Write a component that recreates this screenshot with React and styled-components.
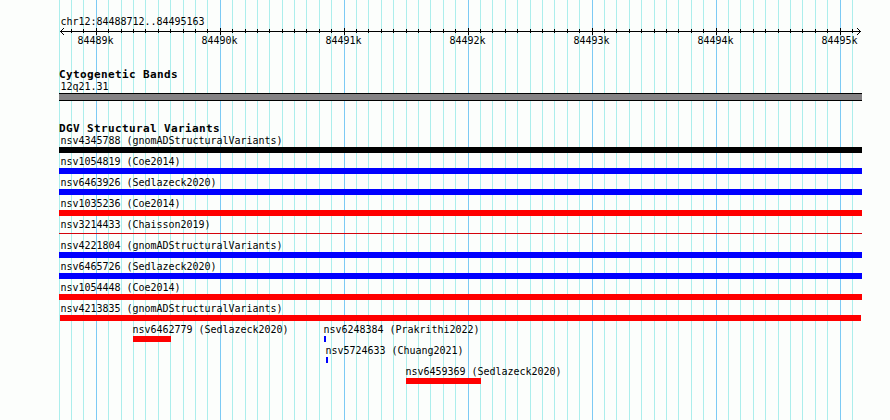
import React from "react";
import styled, { createGlobalStyle } from "styled-components";

const GlobalStyle = createGlobalStyle`
  body {
    margin: 0;
    background: #fcfefc;
  }
`;

const Browser = styled.main`
  position: relative;
  box-sizing: border-box;
  width: 890px;
  height: 420px;
  padding: 15px 28px 0 59px;
  overflow: hidden;
  background: #fcfefc;
  color: #000;
  font-family: "DejaVu Sans Mono", monospace;
`;

const Grid = styled.svg`
  position: absolute;
  inset: 0;
  shape-rendering: crispEdges;
`;

const Content = styled.div`
  position: relative;
  display: flex;
  flex-direction: column;
`;

const Label = styled.div`
  height: 12px;
  margin-left: ${(props) => props.$indent ?? 1.5}px;
  font-size: 10px;
  line-height: 14px;
  letter-spacing: -0.02px;
  white-space: pre;
`;

const Title = styled.h2`
  height: 12px;
  margin: 0;
  font-size: 11px;
  font-weight: bold;
  line-height: 14px;
  letter-spacing: 0.378px;
  white-space: pre;
`;

const Axis = styled.svg`
  display: block;
  width: 803px;
  height: 20px;
  overflow: visible;
  & path {
    fill: none;
    stroke: #000;
    shape-rendering: crispEdges;
  }
  & text {
    font-size: 10px;
    letter-spacing: -0.02px;
  }
`;

const Track = styled.section`
  margin-top: 21px;
`;

const Band = styled.div`
  box-sizing: border-box;
  height: 8px;
  margin-top: 1px;
  border: solid #000;
  border-width: 1px 0;
  background: #848284;
`;

const Row = styled.div`
  display: flex;
  height: 21px;
`;

const Variant = styled.div`
  flex: none;
  width: ${(props) => props.$width}px;
  margin-left: ${(props) => props.$gap}px;
`;

const Bar = styled.div`
  height: ${(props) => (props.$thin ? 1 : 6)}px;
  margin-top: ${(props) => (props.$thin ? 3 : 1)}px;
  background: ${(props) => props.$color};
`;

const LEFT = 59;

// one line every 100 bp, every tenth one falls on a full kb
const lines = Array.from({ length: 65 }, (_, i) => {
  const n = i - 3;
  return { x: Math.floor(96.25 + n * 12.3965), major: n % 10 === 0, kb: 84489 + n / 10 };
});

// gap is the distance to the previous variant of the same row
const rows = [
  [{ name: "nsv4345788 (gnomADStructuralVariants)", color: "#000" }],
  [{ name: "nsv1054819 (Coe2014)", color: "#00f" }],
  [{ name: "nsv6463926 (Sedlazeck2020)", color: "#00f" }],
  [{ name: "nsv1035236 (Coe2014)", color: "#f00" }],
  [{ name: "nsv3214433 (Chaisson2019)", color: "#d4020c", thin: true }],
  [{ name: "nsv4221804 (gnomADStructuralVariants)", color: "#00f" }],
  [{ name: "nsv6465726 (Sedlazeck2020)", color: "#00f" }],
  [{ name: "nsv1054448 (Coe2014)", color: "#f00" }],
  [{ name: "nsv4213835 (gnomADStructuralVariants)", color: "#f00", gap: 1, width: 801, indent: 0.5 }],
  [
    { name: "nsv6462779 (Sedlazeck2020)", color: "#f00", gap: 74, width: 38, indent: -0.5 },
    { name: "nsv6248384 (Prakrithi2022)", color: "#00f", gap: 153, width: 2, indent: -0.5 },
  ],
  [{ name: "nsv5724633 (Chuang2021)", color: "#00f", gap: 267, width: 2, indent: -0.5 }],
  [{ name: "nsv6459369 (Sedlazeck2020)", color: "#f00", gap: 347, width: 75, indent: -0.5 }],
];

const Ruler = () => (
  <Axis>
    <path d="M1 4.5H802" />
    <path d="M4.5 1v1M3.5 2v1M2.5 3v1M1.5 4v1M2.5 5v1M3.5 6v1M4.5 7v1" />
    <path d="M798.5 1v1M799.5 2v1M800.5 3v1M801.5 4v1M800.5 5v1M799.5 6v1M798.5 7v1" />
    {lines.slice(1).map(({ x, major }) => (
      <path key={x} d={`M${x - LEFT + 0.5} ${major ? "1v7" : "2v4"}`} />
    ))}
    {lines
      .filter((line) => line.major)
      .map(({ x, kb }) => (
        <text key={kb} x={x - LEFT - 18.5} y="17">
          {kb}k
        </text>
      ))}
  </Axis>
);

const App = () => {
  return (
    <Browser>
      <GlobalStyle />
      <Grid width="890" height="420">
        {lines.map(({ x, major }) => (
          <rect key={x} x={x} width="1" height="420" fill={major ? "#7ccaf4" : "#aceeec"} />
        ))}
      </Grid>
      <Content>
        <Label>chr12:84488712..84495163</Label>
        <Ruler />
        <Track>
          <Title>Cytogenetic Bands</Title>
          <Label>12q21.31</Label>
          <Band />
        </Track>
        <Track>
          <Title>DGV Structural Variants</Title>
          {rows.map((row) => (
            <Row key={row[0].name}>
              {row.map(({ name, color, thin, gap = 0, width = 803, indent }) => (
                <Variant key={name} $gap={gap} $width={width}>
                  <Label $indent={indent}>{name}</Label>
                  <Bar $color={color} $thin={thin} />
                </Variant>
              ))}
            </Row>
          ))}
        </Track>
      </Content>
    </Browser>
  );
};

export default App;
